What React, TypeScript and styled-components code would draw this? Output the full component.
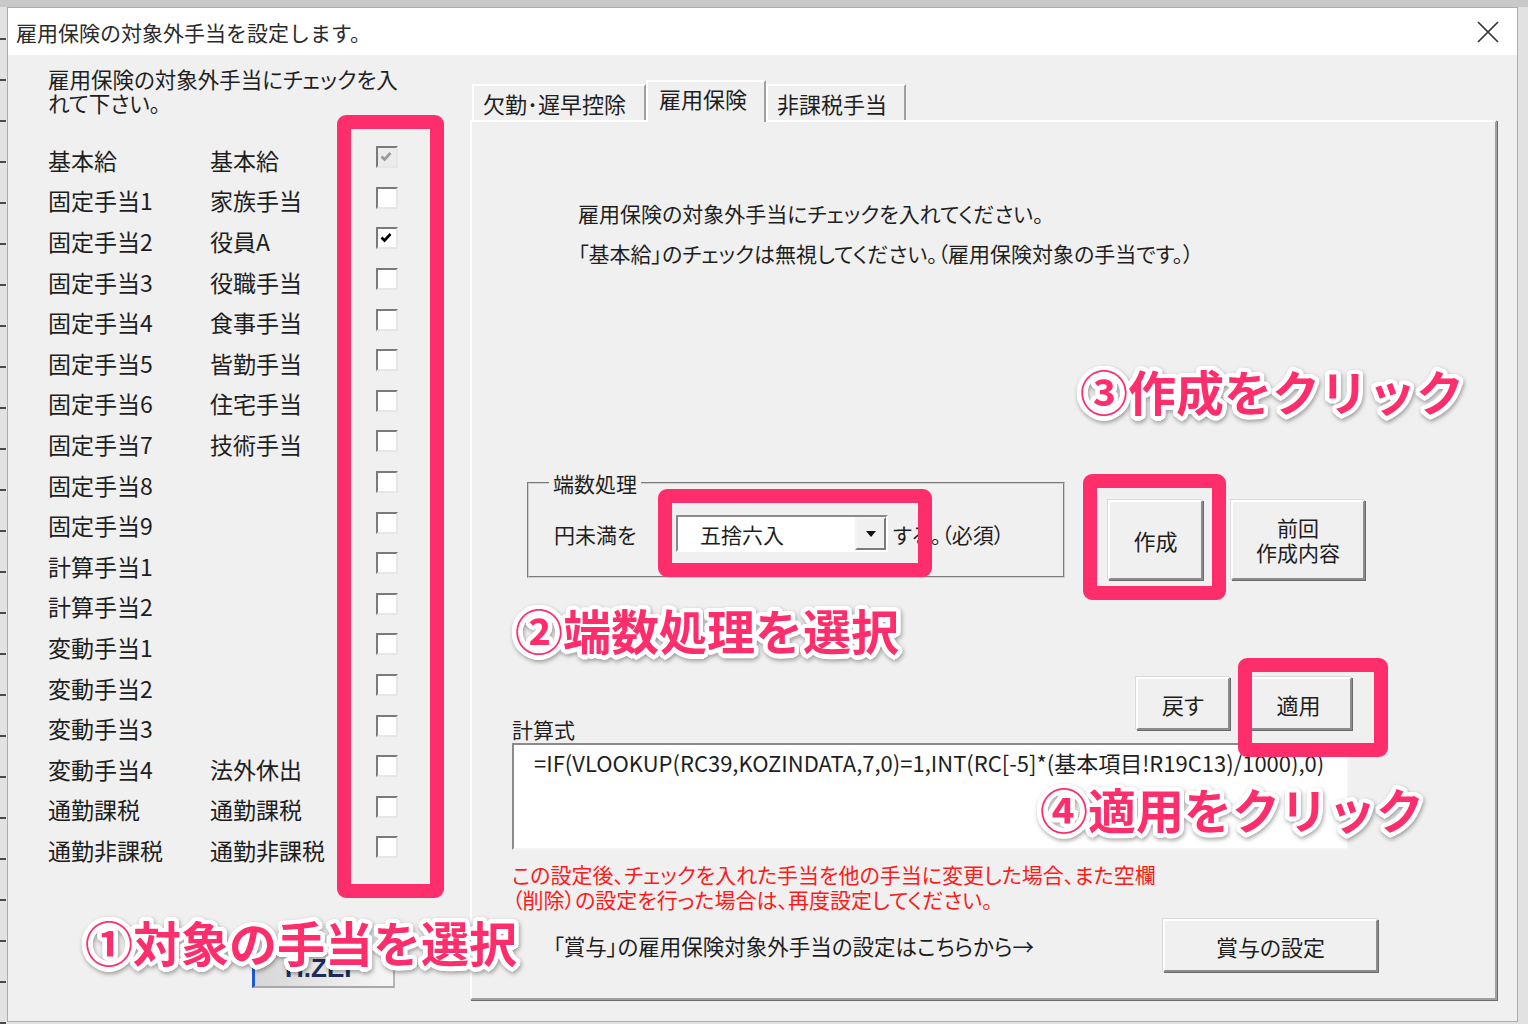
import React from 'react'
import styled, { createGlobalStyle } from 'styled-components'

const PINK = '#fe2e6c'
const UI_FONT = '"Noto Sans CJK JP", "Noto Sans", sans-serif'

// white halo around the callout text, built from a ring of hard shadows
const halo = Array.from({ length: 16 }, (_, i) => {
    const a = (i / 16) * Math.PI * 2
    return `${(Math.cos(a) * 4.5).toFixed(2)}px ${(Math.sin(a) * 4.5).toFixed(2)}px 0 #fff`
}).join(', ')

const GlobalStyle = createGlobalStyle`
    html, body {
        margin: 0;
        padding: 0;
    }
    body {
        width: 1528px;
        height: 1024px;
        overflow: hidden;
        font-family: ${UI_FONT};
        color: #1e1e1e;
    }
`

const Backdrop = styled.div`
    position: relative;
    width: 1528px;
    height: 1024px;
    box-sizing: border-box;
    padding: 7px 0 0 7px;
    overflow: hidden;
    background:
        repeating-linear-gradient(to bottom, transparent 0 38px, #4a4a4a 38px 40px, transparent 40px 41px) left top / 6px 100% no-repeat,
        linear-gradient(to bottom, #c9c9c9 0 7px, transparent 7px),
        #e2e2e2;
`

const Window = styled.div`
    width: 1511px;
    height: 1015px;
    box-sizing: border-box;
    border: 1px solid #86b5ee;
    background: #f0f0f0;
    display: flex;
    flex-direction: column;
`

const TitleBar = styled.div`
    height: 47px;
    flex: none;
    background: #fff;
    display: flex;
    align-items: center;
    justify-content: space-between;
    padding: 0 18px 0 8px;
`

const Title = styled.span`
    font-size: 21px;
    color: #2a2a2a;
`

const CloseIcon = () => (
    <svg width="22" height="22" viewBox="0 0 22 22">
        <path d="M1 1 L21 21 M21 1 L1 21" stroke="#333" strokeWidth="1.7" fill="none" />
    </svg>
)

const Main = styled.div`
    flex: 1;
    display: flex;
`

const LeftPane = styled.div`
    width: 462px;
    flex: none;
    box-sizing: border-box;
    padding: 12px 0 0 40px;
`

const Instruction = styled.p`
    margin: 0;
    font-size: 21.5px;
    line-height: 24px;
    font-feature-settings: "palt";
`

const RowGrid = styled.div`
    margin-top: 25px;
    display: grid;
    grid-template-columns: 162px 166px 22px;
    grid-auto-rows: 40.6px;
    align-items: center;
`

const RowLabel = styled.span`
    font-size: 23px;
    line-height: 1;
    white-space: nowrap;
`

type CheckState = 'on' | 'off' | 'disabled'

const Box = styled.span<{ $state: CheckState }>`
    display: block;
    width: 22px;
    height: 22px;
    box-sizing: border-box;
    border: 2px solid;
    border-color: #7a7a7a #e6e6e6 #e6e6e6 #7a7a7a;
    background: ${p => (p.$state === 'disabled' ? '#ececec' : '#fff')};
    margin-top: -6px;
`

const CheckBox = ({ state }: { state: CheckState }) => (
    <Box $state={state}>
        {state !== 'off' && (
            <svg width="18" height="18" viewBox="0 0 18 18">
                <path
                    d="M3.5 7.5 L6.5 10.5 L12.5 4"
                    stroke={state === 'on' ? '#000' : '#9a9a9a'}
                    strokeWidth="2.6"
                    fill="none"
                />
            </svg>
        )}
    </Box>
)

const PictureButton = styled.div`
    margin: 79px 0 0 204px;
    width: 143px;
    height: 38px;
    box-sizing: border-box;
    border-left: 3px solid #1d5bd6;
    border-bottom: 2px solid #a9a9a9;
    border-right: 2px solid #b5b5b5;
    background: linear-gradient(to right, #d6d6d6, #eeeeee 70%, #f6f6f6);
    color: #1d2c5a;
    font-family: "Liberation Sans", sans-serif;
    font-weight: 700;
    font-size: 26px;
    display: flex;
    align-items: flex-end;
    padding: 0 0 2px 30px;
`

const TabControl = styled.div`
    margin-top: 25px;
    width: 1027px;
    height: 920px;
    display: flex;
    flex-direction: column;
`

const TabStrip = styled.div`
    height: 40px;
    flex: none;
    display: flex;
    align-items: flex-end;
    padding-left: 2px;
`

const Tab = styled.div<{ $w: number; $active?: boolean }>`
    width: ${p => p.$w}px;
    height: ${p => (p.$active ? 42 : 36)}px;
    margin-bottom: ${p => (p.$active ? -2 : 0)}px;
    box-sizing: border-box;
    border-top: 2px solid #fff;
    border-left: 2px solid #fff;
    border-right: 2px solid #a0a0a0;
    background: #f0f0f0;
    padding: ${p => (p.$active ? '0 0 8px 11px' : '0 0 0 9px')};
    display: flex;
    align-items: center;
    font-size: 22px;
    font-feature-settings: "palt";
    white-space: nowrap;
    position: relative;
    z-index: ${p => (p.$active ? 1 : 0)};
`

const TabPanel = styled.div`
    flex: 1;
    box-sizing: border-box;
    border-top: 2px solid #fff;
    border-left: 2px solid #fff;
    border-right: 2px solid #a0a0a0;
    border-bottom: 2px solid #a0a0a0;
    box-shadow: 1px 1px 0 #6d6d6d;
    padding-left: 40px;
    display: flex;
    flex-direction: column;
    align-items: flex-start;
`

const Intro = styled.p`
    margin: 71px 0 0 66px;
    font-size: 21px;
    line-height: 40px;
    font-feature-settings: "palt";
`

const FractionRow = styled.div`
    margin-top: 198px;
    display: flex;
    align-items: flex-start;
`

const GroupBox = styled.fieldset`
    margin: 0 0 0 15px;
    padding: 0;
    width: 538px;
    height: 107px;
    box-sizing: border-box;
    border: 2px groove #cfcfcf;
    min-inline-size: 0;
`

const GroupLegend = styled.legend`
    margin-left: 20px;
    padding: 0 4px;
    font-size: 21px;
    line-height: 24px;
    font-feature-settings: "palt";
`

const GroupContent = styled.div`
    margin: 20px 0 0 25px;
    display: flex;
    align-items: center;
    font-size: 21px;
    font-feature-settings: "palt";
`

const FieldLabel = styled.span`
    width: 122px;
    flex: none;
`

const Combo = styled.div`
    width: 212px;
    height: 37px;
    box-sizing: border-box;
    border: 2px solid;
    border-color: #8a8a8a #fff #fff #8a8a8a;
    background: #fff;
    display: flex;
    align-items: center;
    padding-left: 22px;
    font-size: 21px;
`

const ComboValue = styled.span`
    flex: 1;
`

const ComboArrow = styled.span`
    width: 31px;
    height: 100%;
    box-sizing: border-box;
    border: 2px solid;
    border-color: #f4f4f4 #7c7c7c #7c7c7c #f4f4f4;
    background: #f0f0f0;
    display: flex;
    align-items: center;
    justify-content: center;
`

const Trailing = styled.span`
    margin-left: 5px;
    white-space: nowrap;
`

const Button = styled.button<{ $w: number; $h: number }>`
    width: ${p => p.$w}px;
    height: ${p => p.$h}px;
    flex: none;
    box-sizing: border-box;
    padding: 0;
    background: #f0f0f0;
    border: 2px solid;
    border-color: #fff #8c8c8c #8c8c8c #fff;
    box-shadow: 1px 1px 0 #6a6a6a, -1px -1px 0 #dadada;
    font-family: ${UI_FONT};
    font-size: 22px;
    line-height: 24px;
    color: #1e1e1e;
    font-feature-settings: "palt";
`

const MakeButton = styled(Button)`
    margin: 29px 0 0 43px;
`

const PrevButton = styled(Button)`
    margin: 29px 0 0 28px;
    font-size: 21px;
    line-height: 25px;
`

const FormulaHead = styled.div`
    margin-top: 97px;
    width: 840px;
    display: flex;
    justify-content: space-between;
    align-items: flex-start;
`

const FormulaLabel = styled.span`
    margin-top: 40px;
    font-size: 21px;
    line-height: 24px;
`

const ButtonPair = styled.div`
    display: flex;
    gap: 15px;
`

const Formula = styled.div`
    margin-top: 2px;
    width: 837px;
    height: 107px;
    box-sizing: border-box;
    border: 2px solid;
    border-color: #8a8a8a #f4f4f4 #f4f4f4 #8a8a8a;
    background: #fff;
    padding: 3px 0 0 20px;
    overflow: hidden;
    white-space: nowrap;
    font-size: 22px;
    line-height: 28px;
`

const Warning = styled.p`
    margin: 12px 0 0;
    color: #ff1a1a;
    font-size: 21px;
    line-height: 25px;
    font-feature-settings: "palt";
`

const BonusRow = styled.div`
    margin-top: 7px;
    width: 866px;
    display: flex;
    align-items: center;
`

const BonusText = styled.span`
    margin-left: 41px;
    font-size: 21.5px;
    font-feature-settings: "palt";
`

const BonusButton = styled(Button)`
    margin-left: auto;
`

const Frame = styled.div<{ $x: number; $y: number; $w: number; $h: number }>`
    position: absolute;
    left: ${p => p.$x}px;
    top: ${p => p.$y}px;
    width: ${p => p.$w}px;
    height: ${p => p.$h}px;
    box-sizing: border-box;
    border: 14px solid ${PINK};
    border-radius: 9px;
`

const Callout = styled.div<{ $x: number; $y: number }>`
    position: absolute;
    left: ${p => p.$x}px;
    top: ${p => p.$y}px;
    font-family: ${UI_FONT};
    font-weight: 700;
    font-size: 48px;
    line-height: 56px;
    color: ${PINK};
    white-space: nowrap;
    text-shadow: ${halo};
    filter: drop-shadow(1px 2px 2px rgba(0, 0, 0, 0.35));
`

const rows: [string, string, CheckState][] = [
    ['基本給', '基本給', 'disabled'],
    ['固定手当1', '家族手当', 'off'],
    ['固定手当2', '役員A', 'on'],
    ['固定手当3', '役職手当', 'off'],
    ['固定手当4', '食事手当', 'off'],
    ['固定手当5', '皆勤手当', 'off'],
    ['固定手当6', '住宅手当', 'off'],
    ['固定手当7', '技術手当', 'off'],
    ['固定手当8', '', 'off'],
    ['固定手当9', '', 'off'],
    ['計算手当1', '', 'off'],
    ['計算手当2', '', 'off'],
    ['変動手当1', '', 'off'],
    ['変動手当2', '', 'off'],
    ['変動手当3', '', 'off'],
    ['変動手当4', '法外休出', 'off'],
    ['通勤課税', '通勤課税', 'off'],
    ['通勤非課税', '通勤非課税', 'off'],
]

export default function App() {
    return (
        <Backdrop>
            <GlobalStyle />
            <Window>
                <TitleBar>
                    <Title>雇用保険の対象外手当を設定します。</Title>
                    <CloseIcon />
                </TitleBar>
                <Main>
                    <LeftPane>
                        <Instruction>
                            雇用保険の対象外手当にチェックを入
                            <br />
                            れて下さい。
                        </Instruction>
                        <RowGrid>
                            {rows.map(([item, name, state], i) => (
                                <React.Fragment key={i}>
                                    <RowLabel>{item}</RowLabel>
                                    <RowLabel>{name}</RowLabel>
                                    <CheckBox state={state} />
                                </React.Fragment>
                            ))}
                        </RowGrid>
                        <PictureButton>H.ZEI</PictureButton>
                    </LeftPane>
                    <TabControl>
                        <TabStrip>
                            <Tab $w={174}>欠勤･遅早控除</Tab>
                            <Tab $w={120} $active>雇用保険</Tab>
                            <Tab $w={140}>非課税手当</Tab>
                        </TabStrip>
                        <TabPanel>
                            <Intro>
                                雇用保険の対象外手当にチェックを入れてください。
                                <br />
                                「基本給」のチェックは無視してください。（雇用保険対象の手当です。）
                            </Intro>
                            <FractionRow>
                                <GroupBox>
                                    <GroupLegend>端数処理</GroupLegend>
                                    <GroupContent>
                                        <FieldLabel>円未満を</FieldLabel>
                                        <Combo>
                                            <ComboValue>五捨六入</ComboValue>
                                            <ComboArrow>
                                                <svg width="10" height="6" viewBox="0 0 10 6">
                                                    <path d="M0 0 H10 L5 6 Z" fill="#111" />
                                                </svg>
                                            </ComboArrow>
                                        </Combo>
                                        <Trailing>する。（必須）</Trailing>
                                    </GroupContent>
                                </GroupBox>
                                <MakeButton $w={95} $h={80}>作成</MakeButton>
                                <PrevButton $w={134} $h={80}>
                                    前回
                                    <br />
                                    作成内容
                                </PrevButton>
                            </FractionRow>
                            <FormulaHead>
                                <FormulaLabel>計算式</FormulaLabel>
                                <ButtonPair>
                                    <Button $w={94} $h={53}>戻す</Button>
                                    <Button $w={107} $h={53}>適用</Button>
                                </ButtonPair>
                            </FormulaHead>
                            <Formula>=IF(VLOOKUP(RC39,KOZINDATA,7,0)=1,INT(RC[-5]*(基本項目!R19C13)/1000),0)</Formula>
                            <Warning>
                                この設定後、チェックを入れた手当を他の手当に変更した場合、また空欄
                                <br />
                                （削除）の設定を行った場合は、再度設定してください。
                            </Warning>
                            <BonusRow>
                                <BonusText>「賞与」の雇用保険対象外手当の設定はこちらから→</BonusText>
                                <BonusButton $w={215} $h={53}>賞与の設定</BonusButton>
                            </BonusRow>
                        </TabPanel>
                    </TabControl>
                </Main>
            </Window>

            <Frame $x={337} $y={115} $w={107} $h={783} />
            <Frame $x={658} $y={489} $w={274} $h={88} />
            <Frame $x={1083} $y={474} $w={143} $h={126} />
            <Frame $x={1238} $y={658} $w={150} $h={99} />

            <Callout $x={1080} $y={362}>③作成をクリック</Callout>
            <Callout $x={515} $y={601}>②端数処理を選択</Callout>
            <Callout $x={1040} $y={780}>④適用をクリック</Callout>
            <Callout $x={85} $y={913}>①対象の手当を選択</Callout>
        </Backdrop>
    )
}
